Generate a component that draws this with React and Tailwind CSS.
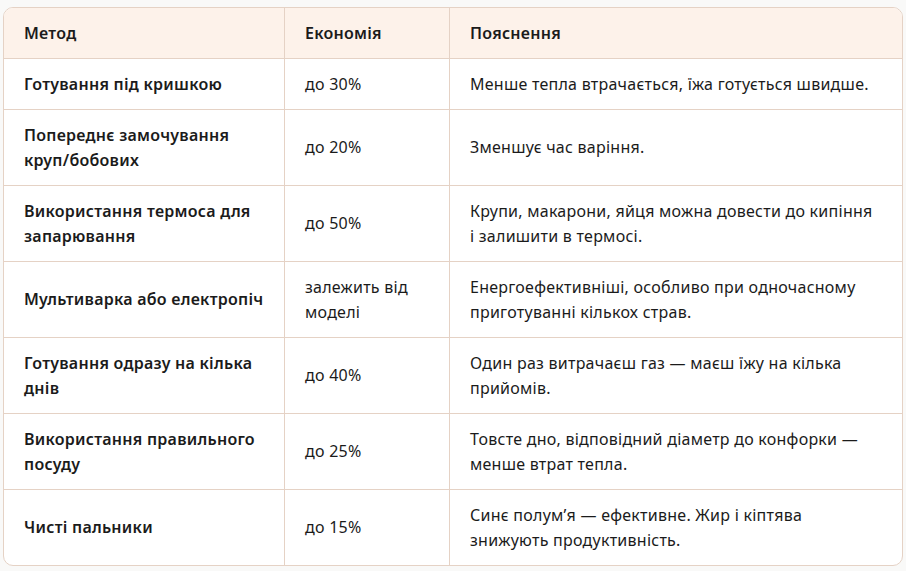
import React from "react";

const rows = [
  ["Готування під кришкою", "до 30%", "Менше тепла втрачається, їжа готується швидше."],
  ["Попереднє замочування круп/бобових", "до 20%", "Зменшує час варіння."],
  ["Використання термоса для запарювання", "до 50%", "Крупи, макарони, яйця можна довести до кипіння і залишити в термосі."],
  ["Мультиварка або електропіч", "залежить від моделі", "Енергоефективніші, особливо при одночасному приготуванні кількох страв."],
  ["Готування одразу на кілька днів", "до 40%", "Один раз витрачаєш газ — маєш їжу на кілька прийомів."],
  ["Використання правильного посуду", "до 25%", "Товсте дно, відповідний діаметр до конфорки — менше втрат тепла."],
  ["Чисті пальники", "до 15%", "Синє полум’я — ефективне. Жир і кіптява знижують продуктивність."],
];

const App = () => {
  return (
    <div
      className="min-h-screen bg-[#f9f9f8] px-[3px] pt-[7px]"
      style={{ fontFamily: '"Segoe UI", "Noto Sans", sans-serif' }}
    >
      <div className="w-[900px] rounded-[10px] border border-[#e5d2c5] bg-white overflow-hidden text-[16px] leading-[25px] tracking-[0.25px] text-[#1b1b1b]">
        <div className="grid grid-cols-[281px_165px_1fr]">
          {/* header */}
          <div className="bg-[#fdf2ea] px-5 py-[12.5px] font-semibold border-r border-b border-[#e5d2c5]">Метод</div>
          <div className="bg-[#fdf2ea] px-5 py-[12.5px] font-semibold border-r border-b border-[#e5d2c5]">Економія</div>
          <div className="bg-[#fdf2ea] pl-5 pr-7 py-[12.5px] font-semibold border-b border-[#e5d2c5]">Пояснення</div>
          {rows.map((r, i) => {
            const last = i === rows.length - 1;
            return (
              <React.Fragment key={i}>
                <div className={"flex items-center px-5 py-[12.5px] font-semibold border-r border-[#e5d2c5] " + (last ? "" : "border-b")}>
                  {r[0]}
                </div>
                <div className={"flex items-center px-5 py-[12.5px] border-r border-[#e5d2c5] " + (last ? "" : "border-b")}>
                  {r[1]}
                </div>
                <div className={"flex items-center pl-5 pr-7 py-[12.5px] border-[#e5d2c5] " + (last ? "" : "border-b")}>
                  {r[2]}
                </div>
              </React.Fragment>
            );
          })}
        </div>
      </div>
    </div>
  );
};

export default App;
